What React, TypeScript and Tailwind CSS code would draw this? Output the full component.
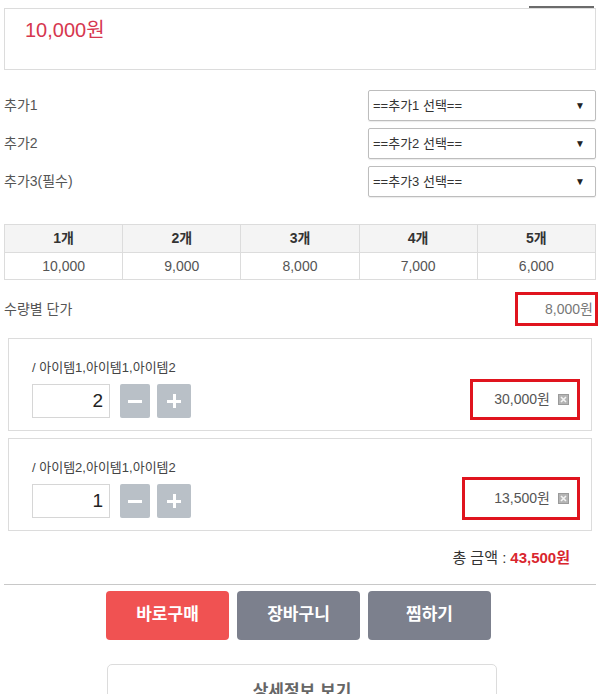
import React from "react";

const font = { fontFamily: '"Liberation Sans", "Noto Sans CJK KR", sans-serif' };

const options = ["추가1", "추가2", "추가3(필수)"];
const selects = ["==추가1 선택==", "==추가2 선택==", "==추가3 선택=="];
const tiers = [
  { q: "1개", p: "10,000" },
  { q: "2개", p: "9,000" },
  { q: "3개", p: "8,000" },
  { q: "4개", p: "7,000" },
  { q: "5개", p: "6,000" },
];

const items = [
  { name: "/ 아이템1,아이템1,아이템2", qty: "2", price: "30,000원", boxW: "w-[110px]", boxH: "h-[41px]" },
  { name: "/ 아이템2,아이템1,아이템2", qty: "1", price: "13,500원", boxW: "w-[118px]", boxH: "h-[43px]" },
];

const CloseIcon = () => (
  <svg width="11" height="11" viewBox="0 0 11 11" className="ml-[8px]">
    <rect x="0" y="0" width="11" height="11" fill="#9a9a9a" />
    <rect x="1" y="1" width="9" height="9" fill="#b4b4b4" />
    <path d="M3 3 L8 8 M8 3 L3 8" stroke="#f4f4f4" strokeWidth="1.6" />
  </svg>
);

const App: React.FC = () => {
  return (
    <div className="relative w-[600px] h-[694px] overflow-hidden bg-white text-[#555]" style={font}>
      {/* top price box */}
      <div className="pt-[8px] px-[4px]">
        <div className="h-[62px] border border-[#dcdcdc] pl-[20px] pt-[6px]">
          <span className="text-[20px] text-[#d6374f]">10,000원</span>
        </div>
      </div>
      <div className="absolute left-[529px] top-[6px] h-[2px] w-[65px] bg-[#6b6b6b]" />

      {/* options */}
      <div className="mt-[20px] px-[4px] flex flex-col gap-[7px]">
        {options.map((o, i) => (
          <div key={o} className="flex items-center justify-between">
            <span className="text-[14px] text-[#555]">{o}</span>
            <div className="flex h-[31px] w-[228px] items-center justify-between rounded-[2px] border border-[#bdbdbd] pl-[4px] pr-[10px] shadow-[0_1px_1px_rgba(0,0,0,0.08)]">
              <span className="text-[13px] text-[#333]">{selects[i]}</span>
              <span className="text-[10px] text-[#222]">▼</span>
            </div>
          </div>
        ))}
      </div>

      {/* tier table */}
      <div className="mt-[27px] px-[4px]">
        <table className="w-full border-collapse table-fixed text-[14px]">
          <thead>
            <tr className="bg-[#f4f4f4]">
              {tiers.map((t) => (
                <th key={t.q} className="h-[28px] border border-[#dcdcdc] font-bold text-[#333]">
                  {t.q}
                </th>
              ))}
            </tr>
          </thead>
          <tbody>
            <tr>
              {tiers.map((t) => (
                <td key={t.q} className="h-[27px] border border-[#dcdcdc] text-center text-[#555]">
                  {t.p}
                </td>
              ))}
            </tr>
          </tbody>
        </table>
      </div>

      {/* unit price */}
      <div className="mt-[12px] flex items-center justify-between pl-[4px] pr-[2px]">
        <span className="text-[14px] text-[#555]">수량별 단가</span>
        <div className="flex h-[34px] w-[83px] items-center justify-end border-[3px] border-[#e0141e] pr-[2px] text-[14px] text-[#777]">
          8,000원
        </div>
      </div>

      {/* selected items */}
      <div className="mt-[12px] flex flex-col gap-[7px] px-[8px]">
        {items.map((it) => (
          <div key={it.name} className="flex h-[93px] items-end justify-between border border-[#dcdcdc] pb-[12px] pl-[23px] pr-[11px]">
            <div className="flex flex-col">
              <span className="mb-[7px] text-[13px] text-[#444]">{it.name}</span>
              <div className="flex items-center gap-[7px]">
                <div className="flex h-[34px] w-[78px] items-center justify-end border border-[#d6d6d6] pr-[6px] text-[19px] text-[#222]">
                  {it.qty}
                </div>
                <div className="ml-[3px] flex h-[34px] w-[30px] items-center justify-center rounded-[2px] bg-[#b9c0c7]">
                  <div className="h-[3px] w-[14px] bg-white" />
                </div>
                <div className="relative flex h-[34px] w-[34px] items-center justify-center rounded-[2px] bg-[#b9c0c7]">
                  <div className="h-[3px] w-[14px] bg-white" />
                  <div className="absolute h-[14px] w-[3px] bg-white" />
                </div>
              </div>
            </div>
            <div className={`mb-[-2px] flex ${it.boxW} ${it.boxH} items-center justify-end border-[3px] border-[#e0141e] pr-[8px] text-[14px] text-[#555]`}>
              {it.price}
              <CloseIcon />
            </div>
          </div>
        ))}
      </div>

      {/* total */}
      <div className="mt-[16px] flex justify-end pr-[30px] text-[15px]">
        <span className="text-[#333]">총 금액 : </span>
        <span className="ml-[4px] font-bold text-[#d9262e]">43,500원</span>
      </div>
      <div className="mx-[4px] mt-[14px] h-px bg-[#c8c8c8]" />

      {/* action buttons */}
      <div className="mt-[6px] flex justify-center gap-[8px] pr-[3px]">
        <button className="h-[49px] w-[123px] rounded-[4px] bg-[#f05252] text-[17px] font-bold text-white">바로구매</button>
        <button className="h-[49px] w-[123px] rounded-[4px] bg-[#7c808d] text-[17px] font-bold text-white">장바구니</button>
        <button className="h-[49px] w-[123px] rounded-[4px] bg-[#7c808d] text-[17px] font-bold text-white">찜하기</button>
      </div>

      {/* detail */}
      <div className="mt-[24px] flex justify-center">
        <div className="ml-[4px] h-[50px] w-[390px] rounded-[5px] border border-[#dcdcdc] pt-[14px] text-center text-[17px] font-bold text-[#666]">
          상세정보 보기
        </div>
      </div>
    </div>
  );
};

export default App;
